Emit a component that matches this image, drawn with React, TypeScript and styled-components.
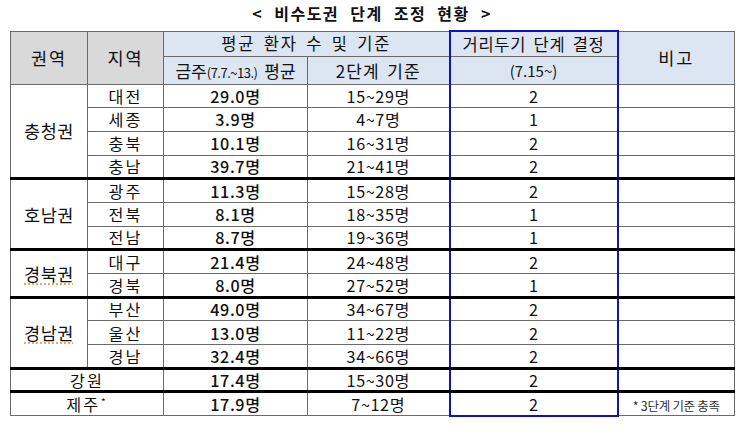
import React from "react";
import styled, { createGlobalStyle, css } from "styled-components";

const GlobalStyle = createGlobalStyle`
  html, body {
    margin: 0;
    background: #fff;
  }
  body {
    font-family: "Noto Sans CJK KR", "Noto Sans", sans-serif;
    color: #111;
  }
`;

const Page = styled.div`
  width: 745px;
  height: 436px;
  padding: 4px 0 0 10px;
  box-sizing: border-box;
`;

const Title = styled.h1`
  margin: 0 0 7px;
  width: 724px;
  text-align: center;
  font-size: 16px;
  line-height: 19px;
  font-weight: 700;
  letter-spacing: 1.5px;
  word-spacing: 6px;
`;

const Table = styled.table`
  border-collapse: collapse;
  table-layout: fixed;
  width: 724px;
`;

const BLUE = "#1010d0";

type CellProps = {
  $bg?: "grey" | "blue";
  $thick?: boolean;
  $blue?: boolean;
  $blueTop?: boolean;
  $blueBottom?: boolean;
  $size?: number;
  $weight?: number;
  $spacing?: number;
};

const cellBase = css<CellProps>`
  border: 1px solid #6a6a6a;
  padding: 0;
  text-align: center;
  vertical-align: middle;
  line-height: 1;
  font-size: ${p => p.$size ?? 16}px;
  font-weight: ${p => p.$weight ?? 400};
  letter-spacing: ${p => p.$spacing ?? 0}px;
  white-space: nowrap;
  background: ${p =>
    p.$bg === "grey" ? "#d9d9d9" : p.$bg === "blue" ? "#dce6f2" : "#fff"};
  ${p => p.$thick && css`border-top: 3px solid #000;`}
  ${p =>
    p.$blue &&
    css`
      border-left: 2px solid ${BLUE};
      border-right: 2px solid ${BLUE};
    `}
  ${p => p.$blueTop && css`border-top: 2px solid ${BLUE};`}
  ${p => p.$blueBottom && css`border-bottom: 2px solid ${BLUE};`}
`;

const Th = styled.th<CellProps>`
  ${cellBase}
  word-spacing: 3px;
`;

const Td = styled.td<CellProps>`
  ${cellBase}
`;

const HeadRow = styled.tr<{ $h: number }>`
  height: ${p => p.$h}px;
`;

const Row = styled.tr`
  height: 23.7px;
`;

const Squiggle = styled.span`
  text-decoration: underline dotted #e0a050;
  text-underline-offset: 3px;
`;

const Star = styled.sup`
  font-size: 10px;
  line-height: 1;
  vertical-align: 5px;
  margin-left: 1px;
`;

const Period = styled.span`
  font-size: 13px;
  letter-spacing: -0.5px;
`;

const Note = styled.span`
  font-size: 12.5px;
  color: #333;
  letter-spacing: -0.3px;
`;

type Item = { area: string; count: string; range: string; level: string };
type Group = { region: string; squiggle?: boolean; items: Item[] };

const groups: Group[] = [
  {
    region: "충청권",
    items: [
      { area: "대전", count: "29.0명", range: "15~29명", level: "2" },
      { area: "세종", count: "3.9명", range: "4~7명", level: "1" },
      { area: "충북", count: "10.1명", range: "16~31명", level: "2" },
      { area: "충남", count: "39.7명", range: "21~41명", level: "2" },
    ],
  },
  {
    region: "호남권",
    items: [
      { area: "광주", count: "11.3명", range: "15~28명", level: "2" },
      { area: "전북", count: "8.1명", range: "18~35명", level: "1" },
      { area: "전남", count: "8.7명", range: "19~36명", level: "1" },
    ],
  },
  {
    region: "경북권",
    squiggle: true,
    items: [
      { area: "대구", count: "21.4명", range: "24~48명", level: "2" },
      { area: "경북", count: "8.0명", range: "27~52명", level: "1" },
    ],
  },
  {
    region: "경남권",
    squiggle: true,
    items: [
      { area: "부산", count: "49.0명", range: "34~67명", level: "2" },
      { area: "울산", count: "13.0명", range: "11~22명", level: "2" },
      { area: "경남", count: "32.4명", range: "34~66명", level: "2" },
    ],
  },
];

export default function App() {
  return (
    <Page>
      <GlobalStyle />
      <Title>&lt; 비수도권 단계 조정 현황 &gt;</Title>
      <Table>
        <colgroup>
          <col style={{ width: 77 }} />
          <col style={{ width: 76 }} />
          <col style={{ width: 144 }} />
          <col style={{ width: 142 }} />
          <col style={{ width: 168 }} />
          <col style={{ width: 117 }} />
        </colgroup>
        <thead>
          <HeadRow $h={25}>
            <Th rowSpan={2} $bg="grey" $size={17.5} $spacing={2}>권역</Th>
            <Th rowSpan={2} $bg="grey" $size={17.5} $spacing={2}>지역</Th>
            <Th colSpan={2} $bg="blue" $size={16.5} $spacing={1.8}>평균 환자 수 및 기준</Th>
            <Th $bg="blue" $blue $blueTop $size={16.5} $spacing={0.7}>거리두기 단계 결정</Th>
            <Th rowSpan={2} $bg="blue" $size={17.5} $spacing={2}>비고</Th>
          </HeadRow>
          <HeadRow $h={28}>
            <Th $bg="blue" $size={17}>
              금주<Period>(7.7.~13.)</Period> 평균
            </Th>
            <Th $bg="blue" $size={17} $spacing={1}>2단계 기준</Th>
            <Th $bg="blue" $blue $size={15}>(7.15~)</Th>
          </HeadRow>
        </thead>
        <tbody>
          {groups.map((g, gi) =>
            g.items.map((it, i) => (
              <Row key={it.area}>
                {i === 0 && (
                  <Td rowSpan={g.items.length} $thick={gi > 0} $size={17.5} $spacing={0.5}>
                    {g.squiggle ? <Squiggle>{g.region}</Squiggle> : g.region}
                  </Td>
                )}
                <Td $thick={gi > 0 && i === 0} $size={16.2} $spacing={2}>{it.area}</Td>
                <Td $thick={gi > 0 && i === 0} $weight={500} $size={16.2} $spacing={0.6}>{it.count}</Td>
                <Td $thick={gi > 0 && i === 0} $size={16.2} $spacing={0.6}>{it.range}</Td>
                <Td $thick={gi > 0 && i === 0} $blue $size={16.2}>{it.level}</Td>
                <Td $thick={gi > 0 && i === 0} />
              </Row>
            ))
          )}
          <Row>
            <Td colSpan={2} $thick $size={16.2} $spacing={2}>강원</Td>
            <Td $thick $weight={500} $size={16.2} $spacing={0.6}>17.4명</Td>
            <Td $thick $size={16.2} $spacing={0.6}>15~30명</Td>
            <Td $thick $blue $size={16.2}>2</Td>
            <Td $thick />
          </Row>
          <Row>
            <Td colSpan={2} $thick $size={16.2} $spacing={2}>
              제주<Star>*</Star>
            </Td>
            <Td $thick $weight={500} $size={16.2} $spacing={0.6}>17.9명</Td>
            <Td $thick $size={16.2} $spacing={0.6}>7~12명</Td>
            <Td $thick $blue $blueBottom $size={16.2}>2</Td>
            <Td $thick>
              <Note>* 3단계 기준 충족</Note>
            </Td>
          </Row>
        </tbody>
      </Table>
    </Page>
  );
}
